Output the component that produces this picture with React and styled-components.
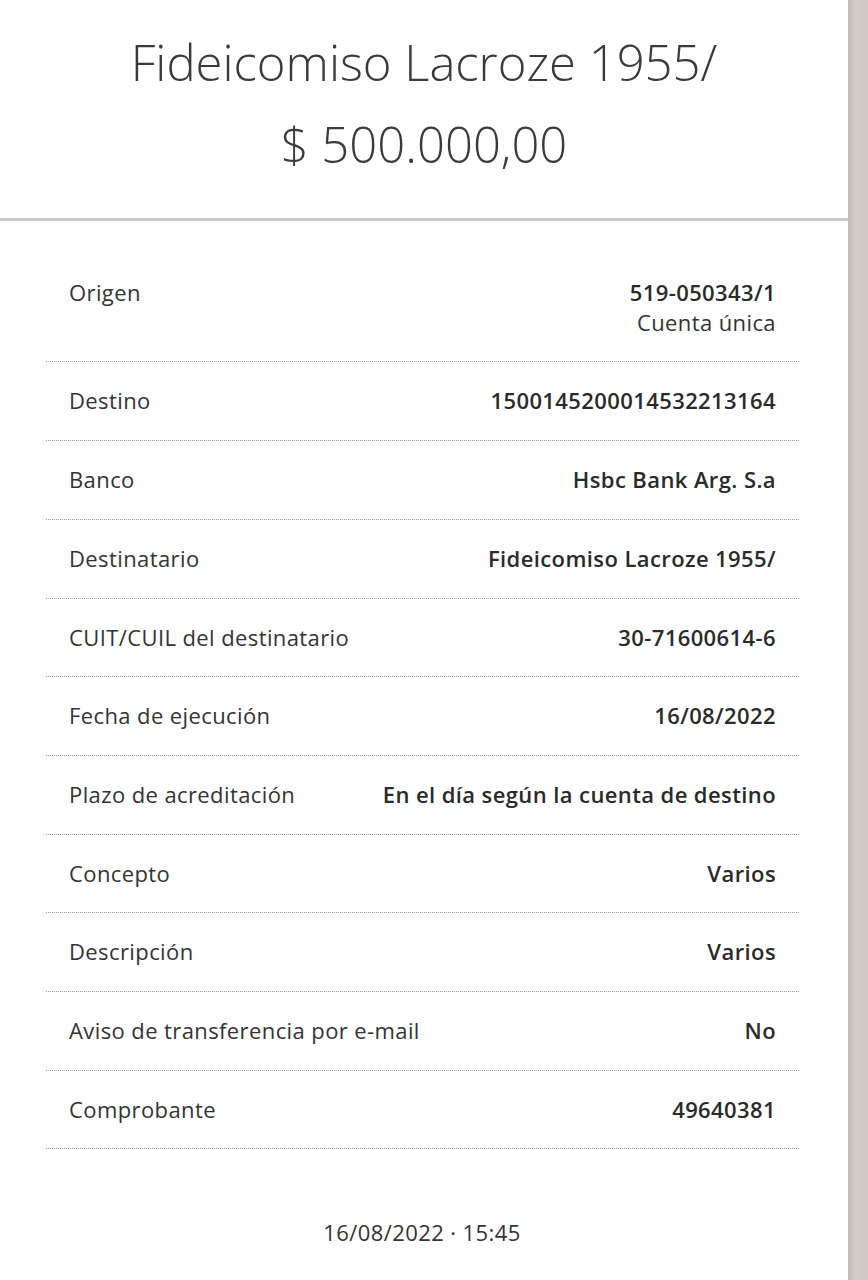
import React from 'react'
import styled, { createGlobalStyle } from 'styled-components'

const GlobalStyle = createGlobalStyle`
  html, body {
    margin: 0;
    padding: 0;
    background: #ccc8c1;
  }
  body {
    font-family: "Open Sans", "Noto Sans", sans-serif;
    color: #333;
  }
`

const rows = [
  { label: 'Origen', value: '519-050343/1', sub: 'Cuenta única' },
  { label: 'Destino', value: '15001452000145322131' + '64' },
  { label: 'Banco', value: 'Hsbc Bank Arg. S.a' },
  { label: 'Destinatario', value: 'Fideicomiso Lacroze 1955/' },
  { label: 'CUIT/CUIL del destinatario', value: '30-71600614-6' },
  { label: 'Fecha de ejecución', value: '16/08/2022' },
  { label: 'Plazo de acreditación', value: 'En el día según la cuenta de destino' },
  { label: 'Concepto', value: 'Varios' },
  { label: 'Descripción', value: 'Varios' },
  { label: 'Aviso de transferencia por e-mail', value: 'No' },
  { label: 'Comprobante', value: '49640381' },
]

const App = () => (
  <Page>
    <GlobalStyle />
    <Panel>
      <Header>
        <Title>Fideicomiso Lacroze 1955/</Title>
        <Title>$ 500.000,00</Title>
      </Header>
      <List>
        {rows.map((r) => (
          <Row key={r.label}>
            <Label>{r.label}</Label>
            <Value>
              <strong>{r.value}</strong>
              {r.sub && <Sub>{r.sub}</Sub>}
            </Value>
          </Row>
        ))}
      </List>
      <Footer>16/08/2022 · 15:45</Footer>
    </Panel>
    <Edge />
  </Page>
)

const Page = styled.div`
  display: flex;
  width: 868px;
  min-height: 1280px;
`

const Panel = styled.div`
  width: 848px;
  background: #fff;
  display: flex;
  flex-direction: column;
`

const Edge = styled.div`
  flex: 1;
  background: linear-gradient(90deg, #bdb9b2 0%, #d3cfc8 35%, #cfcbc4 100%);
`

const Header = styled.div`
  border-bottom: 3px solid #cbcbcb;
  padding: 21px 0 33px;
  text-align: center;
  color: #3a3a3a;
  font-weight: 300;
`

const Title = styled.div`
  font-size: 49px;
  line-height: 82px;
`

const List = styled.div`
  margin: 33px 49px 0 46px;
`

const Row = styled.div`
  display: flex;
  justify-content: space-between;
  align-items: flex-start;
  padding: 24px 23px;
  border-bottom: 1px dotted #999;
  font-size: 22px;
  letter-spacing: 0.4px;
  line-height: 29.7px;
`

const Label = styled.div`
  color: #333;
`

const Value = styled.div`
  text-align: right;
  color: #2a2a2a;
  display: flex;
  flex-direction: column;
  align-items: flex-end;

  strong {
    font-weight: 600;
  }
`

const Sub = styled.span`
  font-weight: 400;
  color: #333;
`

const Footer = styled.div`
  text-align: center;
  font-size: 22px;
  letter-spacing: 0.4px;
  color: #333;
  padding: 68px 0 36px;
  margin-right: 4px;
`

export default App
